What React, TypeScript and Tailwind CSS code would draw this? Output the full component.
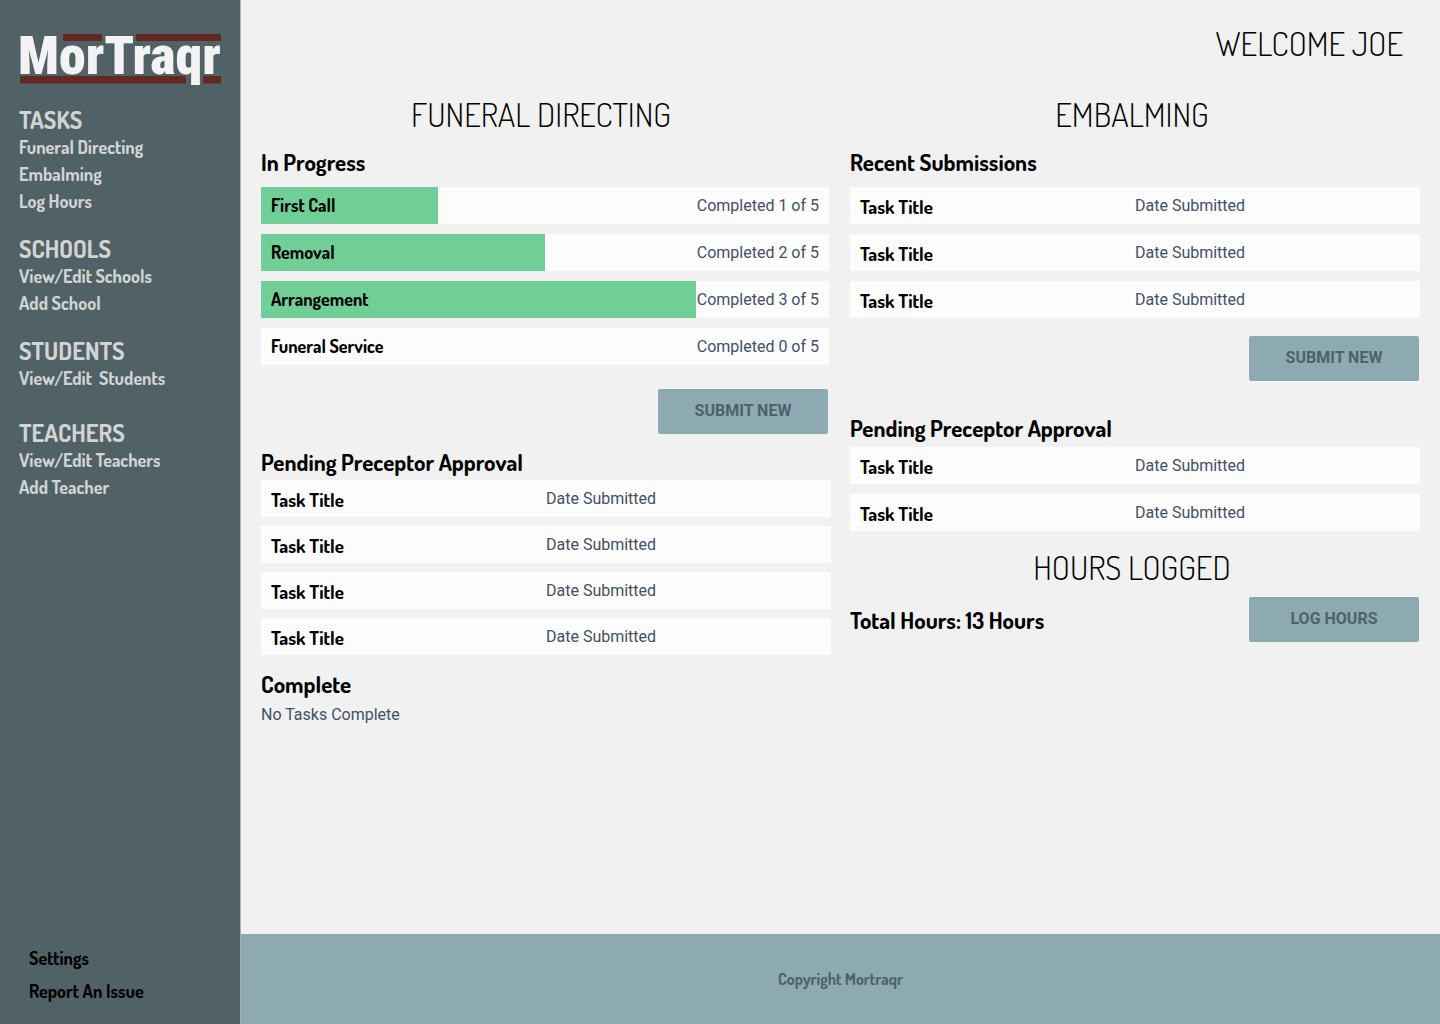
import type { ReactNode } from "react";

const navSections = [
  { title: "TASKS", spacing: "", links: ["Funeral Directing", "Embalming", "Log Hours"] },
  { title: "SCHOOLS", spacing: "mt-5", links: ["View/Edit Schools", "Add School"] },
  { title: "STUDENTS", spacing: "mt-5", links: ["View/Edit  Students"] },
  { title: "TEACHERS", spacing: "mt-[27px]", links: ["View/Edit Teachers", "Add Teacher"] },
];

const progress = [
  { title: "First Call", done: 1, fill: 31.2 },
  { title: "Removal", done: 2, fill: 50 },
  { title: "Arrangement", done: 3, fill: 76.6 },
  { title: "Funeral Service", done: 0, fill: 0 },
];

function Logo() {
  return (
    <svg viewBox="-8 -12 224 68" className="block h-[68px] w-[224px]" role="img" aria-label="MorTraqr">
      <g fill="#642822">
        <rect x="43" y="1" width="39" height="7" />
        <rect x="116" y="1" width="85" height="7" />
        <rect x="0" y="43" width="166" height="7.5" />
        <rect x="183" y="43" width="18" height="7.5" />
      </g>
      <text
        x="-2"
        y="41"
        fill="#f3f3f3"
        stroke="#506266"
        strokeWidth="1.5"
        paintOrder="stroke"
        className="font-['Roboto_Condensed',sans-serif] text-[54px] font-black"
      >
        MorTraqr
      </text>
    </svg>
  );
}

function PageHeading({ children }: { children: ReactNode }) {
  return <h2 className="text-center text-[33px] leading-10 font-light">{children}</h2>;
}

function SectionHeading({ children }: { children: ReactNode }) {
  return <h3 className="text-[23px] leading-8 font-bold">{children}</h3>;
}

function ActionButton({ children }: { children: ReactNode }) {
  return (
    <button
      type="button"
      className="h-[45px] w-[170px] rounded-xs bg-[#8daab2] pb-0.5 font-['Roboto',sans-serif] text-base font-bold text-[#506266]"
    >
      {children}
    </button>
  );
}

function TaskList({ count, gap = "gap-2.5" }: { count: number; gap?: string }) {
  return (
    <ul className={`flex flex-col ${gap}`}>
      {Array.from({ length: count }, (_, i) => (
        <li key={i} className="grid h-[37px] grid-cols-2 items-center bg-[#fcfcfc]">
          <span className="pt-0.5 pl-2.5 text-[19px] leading-6 font-bold">Task Title</span>
          <span className="font-['Roboto',sans-serif] text-base text-[#425066]">Date Submitted</span>
        </li>
      ))}
    </ul>
  );
}

export default function App() {
  return (
    <div className="flex min-h-screen bg-[#f1f1f1] font-['Dosis',sans-serif] text-black">
      <aside className="flex w-[241px] shrink-0 flex-col border-r border-[#a9b1b3] bg-[#506266] pt-[21px] pb-[19px]">
        <div className="pl-3">
          <Logo />
        </div>
        <nav className="mt-[17px] pl-[19px] text-[#d3d3d3]">
          {navSections.map((section) => (
            <section key={section.title} className={section.spacing}>
              <h2 className="text-2xl leading-7 font-bold">{section.title}</h2>
              <ul>
                {section.links.map((link) => (
                  <li key={link} className="text-lg leading-[27px] font-bold whitespace-pre">
                    <a href="#">{link}</a>
                  </li>
                ))}
              </ul>
            </section>
          ))}
        </nav>
        <ul className="mt-auto flex flex-col gap-1.5 pl-[29px] text-lg leading-[27px] font-bold">
          <li>
            <a href="#">Settings</a>
          </li>
          <li>
            <a href="#">Report An Issue</a>
          </li>
        </ul>
      </aside>

      <div className="flex min-w-0 flex-1 flex-col">
        <header className="pt-[23px] pr-[37px]">
          <h1 className="text-right text-[33px] leading-10 font-light">WELCOME JOE</h1>
        </header>

        <main className="grid flex-1 grid-cols-2 items-start gap-[19px] px-5 pt-[31px]">
          <section>
            <div className="pr-2.5">
              <PageHeading>FUNERAL DIRECTING</PageHeading>
            </div>
            <div className="mt-3 pr-0.5">
              <SectionHeading>In Progress</SectionHeading>
              <ul className="mt-[9px] flex flex-col gap-2.5">
                {progress.map((task) => (
                  <li
                    key={task.title}
                    className="relative flex h-[37px] items-center justify-between bg-[#fcfcfc] px-2.5"
                  >
                    <div
                      className="absolute inset-y-0 left-0 bg-[#70cf97]"
                      style={{ width: `${task.fill}%` }}
                    />
                    <span className="relative pb-0.5 text-lg leading-6 font-bold">{task.title}</span>
                    <span className="relative font-['Roboto',sans-serif] text-base text-[#425066]">
                      Completed {task.done} of 5
                    </span>
                  </li>
                ))}
              </ul>
              <div className="mt-6 flex justify-end pr-px">
                <ActionButton>SUBMIT NEW</ActionButton>
              </div>
            </div>
            <div className="mt-3">
              <SectionHeading>Pending Preceptor Approval</SectionHeading>
              <div className="mt-0.5">
                <TaskList count={4} gap="gap-[9px]" />
              </div>
            </div>
            <div className="mt-[13px]">
              <SectionHeading>Complete</SectionHeading>
              <p className="mt-[3px] font-['Roboto',sans-serif] text-base text-[#425066]">No Tasks Complete</p>
            </div>
          </section>

          <section>
            <div className="pr-1.5">
              <PageHeading>EMBALMING</PageHeading>
            </div>
            <div className="mt-3">
              <SectionHeading>Recent Submissions</SectionHeading>
              <div className="mt-[9px]">
                <TaskList count={3} />
              </div>
              <div className="mt-[18px] flex justify-end pr-px">
                <ActionButton>SUBMIT NEW</ActionButton>
              </div>
            </div>
            <div className="mt-[31px]">
              <SectionHeading>Pending Preceptor Approval</SectionHeading>
              <div className="mt-[3px]">
                <TaskList count={2} />
              </div>
            </div>
            <div className="mt-4 pr-1.5">
              <PageHeading>HOURS LOGGED</PageHeading>
            </div>
            <div className="mt-2.5 flex items-center justify-between pr-px">
              <SectionHeading>Total Hours: 13 Hours</SectionHeading>
              <ActionButton>LOG HOURS</ActionButton>
            </div>
          </section>
        </main>

        <footer className="flex h-[90px] items-center justify-center bg-[#8daab2] text-base font-bold text-[#506266]">
          Copyright Mortraqr
        </footer>
      </div>
    </div>
  );
}
